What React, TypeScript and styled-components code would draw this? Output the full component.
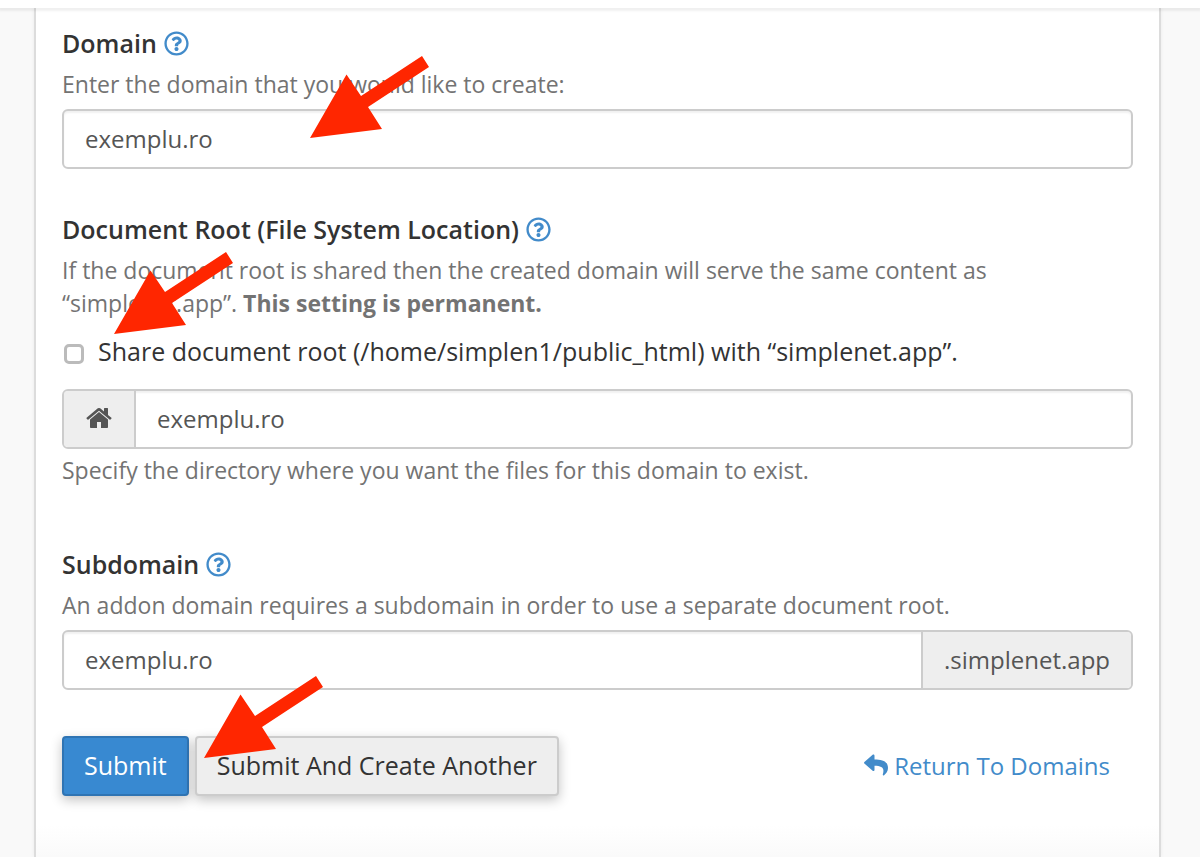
import React from 'react';
import styled, { createGlobalStyle, css } from 'styled-components';
import { FaRegQuestionCircle, FaReply } from 'react-icons/fa';

const GlobalStyle = createGlobalStyle`
  *, *::before, *::after { box-sizing: border-box; }
  body {
    margin: 0;
    background: #f9f9f9;
    color: #333;
    font: 25px/33px "Open Sans", "Noto Sans", sans-serif;
  }
  input, button { font: inherit; }
`;

const Page = styled.div`
  display: flex;
  flex-direction: column;
  min-height: 100vh;
`;

const TopBar = styled.header`
  height: 8px;
  background: #fff;
  box-shadow: 0 2px 2px 1px rgba(0, 0, 0, 0.06);
  z-index: 1;
`;

const Panel = styled.main`
  flex: 1;
  margin: 0 39px 0 34px;
  padding: 19px 26px 58px;
  background: linear-gradient(to top, #fafafa, #fff 32px);
  border: solid #dcdcdc;
  border-width: 0 2px;
  box-shadow: 0 0 4px rgba(0, 0, 0, 0.06);
`;

const Field = styled.section<{ $gap: number }>`
  position: relative;
  margin-bottom: ${(p) => p.$gap}px;
`;

const LabelRow = styled.div`
  display: flex;
  align-items: center;
  gap: 7px;
  margin-bottom: 8px;
`;

const Label = styled.label`
  font-weight: 600;
`;

const HelpButton = styled.button`
  display: flex;
  padding: 0;
  border: 0;
  background: none;
  color: #428bca;
  font-size: 25px;
  cursor: pointer;
`;

const Help = styled.p`
  margin: 0;
  max-width: 960px;
  color: #737373;
  font-size: 23px;
`;

const InputGroup = styled.div`
  display: flex;
  height: 60px;
  margin: 8px 0 5px;
  border: 2px solid #ccc;
  border-radius: 6px;
  background: #fff;
  box-shadow: inset 0 2px 2px rgba(0, 0, 0, 0.06);
  font-size: 24px;
  overflow: hidden;
`;

const TextInput = styled.input`
  flex: 1;
  min-width: 0;
  padding: 0 21px 2px;
  border: 0;
  outline: 0;
  background: transparent;
  color: #555;
`;

const Addon = styled.span<{ $side: 'left' | 'right' }>`
  display: flex;
  align-items: center;
  padding: 0 21px 2px;
  background: #eee;
  color: #555;
  ${(p) => (p.$side === 'left' ? css`border-right: 2px solid #ccc;` : css`border-left: 2px solid #ccc;`)}
`;

const CheckRow = styled.label`
  display: flex;
  align-items: center;
  gap: 14px;
  margin: 15px 0 21px;
`;

const Checkbox = styled.input`
  appearance: none;
  flex: none;
  width: 20px;
  height: 20px;
  margin: 5px 0 0 2px;
  border: 3px solid #bbb;
  border-radius: 5px;
  background: #fff;
  &:checked { background: #428bca; }
`;

const Actions = styled.div`
  position: relative;
  display: flex;
  align-items: center;
  gap: 6px;
`;

const Button = styled.button<{ $primary?: boolean }>`
  height: 60px;
  padding: 0 20px 2px;
  border: 2px solid ${(p) => (p.$primary ? '#2f74b3' : '#ccc')};
  border-radius: 4px;
  background: ${(p) => (p.$primary ? '#3889d1' : '#eee')};
  color: ${(p) => (p.$primary ? '#fff' : '#333')};
  box-shadow: 0 4px 12px rgba(0, 0, 0, 0.24);
  cursor: pointer;
`;

const ReturnLink = styled.a`
  display: flex;
  align-items: center;
  gap: 6px;
  margin-left: auto;
  padding: 0 23px 2px 0;
  color: #428bca;
  font-size: 24px;
  text-decoration: none;
`;

const ArrowSvg = styled.svg<{ $left: number; $top: number }>`
  position: absolute;
  left: ${(p) => p.$left}px;
  top: ${(p) => p.$top}px;
  width: 120px;
  height: 82px;
  pointer-events: none;
`;

const Arrow = ({ left, top }: { left: number; top: number }) => (
  <ArrowSvg $left={left} $top={top} viewBox="0 0 120 82" aria-hidden="true">
    <path d="M0 82 36.500 18.500 51 40 112 0 119 11 58 51 72 73Z" fill="#ff2600" />
  </ArrowSvg>
);

const HomeIcon = () => (
  <svg width="28" height="28" viewBox="0 0 1792 1792" fill="currentColor" aria-hidden="true">
    <path d="M1472 992v480q0 26-19 45t-45 19h-384v-384h-256v384h-384q-26 0-45-19t-19-45v-480q0-1 .5-3t.5-3l575-474 575 474q1 2 1 6zm223-69l-62 74q-8 9-21 11h-3q-13 0-21-7l-692-577-692 577q-12 8-24 7-13-2-21-11l-62-74q-8-10-7-23.500t11-21.500l719-599q32-26 76-26t76 26l244 204v-195q0-14 9-23t23-9h192q14 0 23 9t9 23v408l219 182q10 8 11 21.500t-7 23.500z" />
  </svg>
);

const FieldLabel = ({ htmlFor, children }: { htmlFor: string; children: React.ReactNode }) => (
  <LabelRow>
    <Label htmlFor={htmlFor}>{children}</Label>
    <HelpButton type="button" aria-label="Help">
      <FaRegQuestionCircle />
    </HelpButton>
  </LabelRow>
);

export default function App() {
  return (
    <Page>
      <GlobalStyle />
      <TopBar />
      <Panel>
        <form onSubmit={(e) => e.preventDefault()}>
          <Field $gap={44}>
            <FieldLabel htmlFor="domain">Domain</FieldLabel>
            <Help>Enter the domain that you would like to create:</Help>
            <InputGroup>
              <TextInput id="domain" defaultValue="exemplu.ro" />
            </InputGroup>
            <Arrow left={248} top={29} />
          </Field>

          <Field $gap={61}>
            <FieldLabel htmlFor="docroot">Document Root (File System Location)</FieldLabel>
            <Help>
              If the document root is shared then the created domain will serve the same content as
              “simplenet.app”. <b>This setting is permanent.</b>
            </Help>
            <CheckRow>
              <Checkbox type="checkbox" />
              Share document root (/home/simplen1/public_html) with “simplenet.app”.
            </CheckRow>
            <InputGroup>
              <Addon $side="left">
                <HomeIcon />
              </Addon>
              <TextInput id="docroot" defaultValue="exemplu.ro" />
            </InputGroup>
            <Help>Specify the directory where you want the files for this domain to exist.</Help>
            <Arrow left={52} top={39} />
          </Field>

          <Field $gap={46}>
            <FieldLabel htmlFor="subdomain">Subdomain</FieldLabel>
            <Help>An addon domain requires a subdomain in order to use a separate document root.</Help>
            <InputGroup>
              <TextInput id="subdomain" defaultValue="exemplu.ro" />
              <Addon $side="right">.simplenet.app</Addon>
            </InputGroup>
          </Field>

          <Actions>
            <Button type="submit" $primary>Submit</Button>
            <Button type="button">Submit And Create Another</Button>
            <ReturnLink href="#domains">
              <FaReply />
              Return To Domains
            </ReturnLink>
            <Arrow left={142} top={-60} />
          </Actions>
        </form>
      </Panel>
    </Page>
  );
}
